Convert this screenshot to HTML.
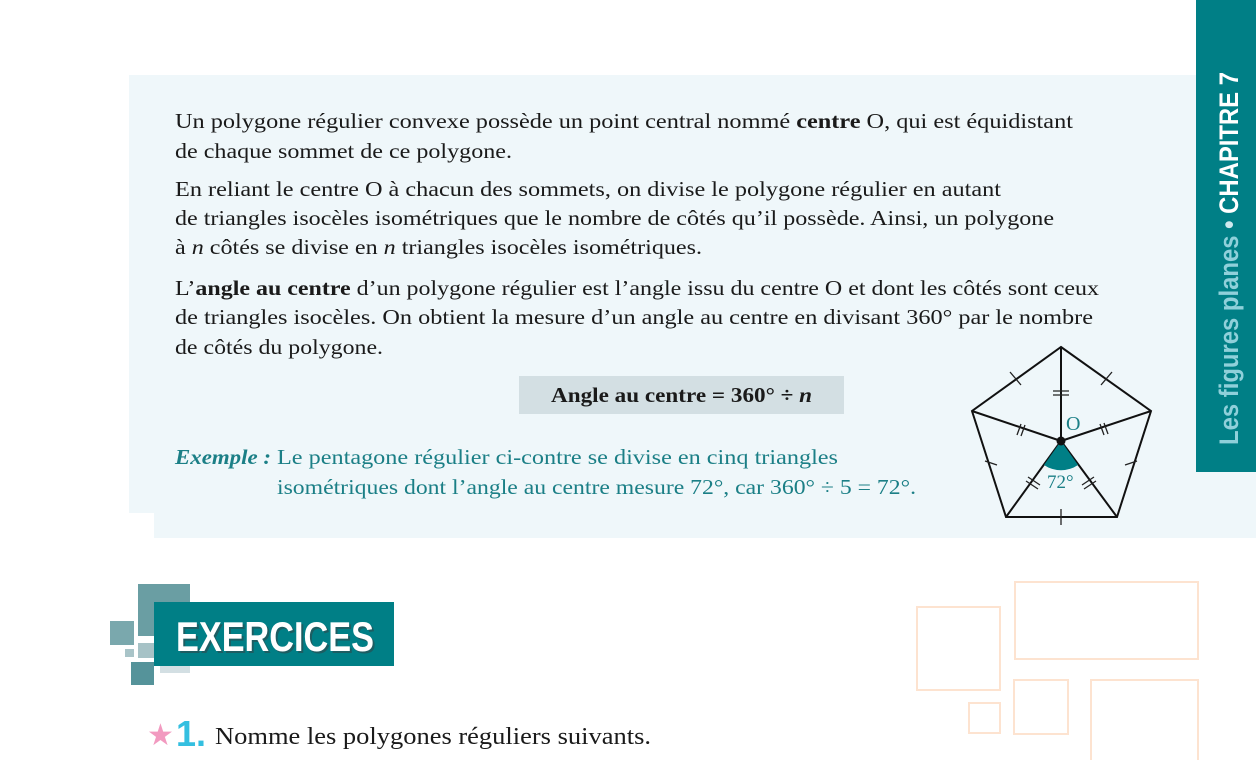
<!DOCTYPE html>
<html><head><meta charset="utf-8"><style>
html,body{margin:0;padding:0;background:#fff;width:1256px;height:760px;overflow:hidden}
svg{display:block}
.t{font-family:"Liberation Serif","DejaVu Serif",serif;font-size:21px;fill:#1a1a1a}
.b{font-weight:bold}
.g{fill:#1b7f86}
</style></head><body>
<svg width="1256" height="760" viewBox="0 0 1256 760" xmlns="http://www.w3.org/2000/svg">
<path d="M129 75H1256V538H154V513H129Z" fill="#eff7fa"/>
<rect x="1196" y="0" width="60" height="472" fill="#007f86"/>
<text transform="translate(1238,445) rotate(-90)" font-family="Liberation Sans Narrow,Liberation Sans,sans-serif" font-weight="bold" font-size="27" textLength="373" lengthAdjust="spacingAndGlyphs"><tspan fill="#8fd0da">Les figures planes  </tspan><tspan fill="#cfe9ee">•  </tspan><tspan fill="#fff">CHAPITRE 7</tspan></text>

<text class="t" x="175" y="128" textLength="898" lengthAdjust="spacingAndGlyphs">Un polygone régulier convexe possède un point central nommé <tspan class="b">centre</tspan> O, qui est équidistant</text>
<text class="t" x="175" y="158" textLength="337" lengthAdjust="spacingAndGlyphs">de chaque sommet de ce polygone.</text>
<text class="t" x="175" y="196" textLength="826" lengthAdjust="spacingAndGlyphs">En reliant le centre O à chacun des sommets, on divise le polygone régulier en autant</text>
<text class="t" x="175" y="225" textLength="879" lengthAdjust="spacingAndGlyphs">de triangles isocèles isométriques que le nombre de côtés qu’il possède. Ainsi, un polygone</text>
<text class="t" x="175" y="254" textLength="527" lengthAdjust="spacingAndGlyphs">à <tspan font-style="italic">n</tspan> côtés se divise en <tspan font-style="italic">n</tspan> triangles isocèles isométriques.</text>
<text class="t" x="175" y="295" textLength="924" lengthAdjust="spacingAndGlyphs">L’<tspan class="b">angle au centre</tspan> d’un polygone régulier est l’angle issu du centre O et dont les côtés sont ceux</text>
<text class="t" x="175" y="324" textLength="918" lengthAdjust="spacingAndGlyphs">de triangles isocèles. On obtient la mesure d’un angle au centre en divisant 360° par le nombre</text>
<text class="t" x="175" y="354" textLength="208" lengthAdjust="spacingAndGlyphs">de côtés du polygone.</text>

<rect x="519" y="376" width="325" height="38" fill="#d3dfe3"/>
<text class="t b" x="551" y="402" textLength="261" lengthAdjust="spacingAndGlyphs">Angle au centre = 360° ÷ <tspan font-style="italic">n</tspan></text>

<text class="t g b" x="175" y="464" font-style="italic" textLength="96" lengthAdjust="spacingAndGlyphs">Exemple :</text>
<text class="t g" x="277" y="464" textLength="561" lengthAdjust="spacingAndGlyphs">Le pentagone régulier ci-contre se divise en cinq triangles</text>
<text class="t g" x="277" y="494" textLength="639" lengthAdjust="spacingAndGlyphs">isométriques dont l’angle au centre mesure 72°, car 360° ÷ 5 = 72°.</text>

<g stroke="#111" stroke-width="2" fill="none">
<path d="M1061 347L1151 411L1117 517L1006 517L972 411Z"/>
<path d="M1061 441L1061 347M1061 441L1151 411M1061 441L1117 517M1061 441L1006 517M1061 441L972 411"/>
</g>
<path d="M1061 441L1044 465A30 30 0 0 0 1078 465Z" fill="#007f86"/>
<circle cx="1061" cy="441" r="4.5" fill="#111"/>
<g stroke="#222" stroke-width="1.3">
<path d="M1010 372L1021 385M1101 385L1112 372M985 461L997 465M1125 465L1137 461M1061 509L1061 525"/>
<path d="M1053 391H1069M1053 395H1069"/>
<path d="M1017 435L1021 424M1021 436L1025 425M1100 424L1104 435M1104 423L1108 434"/>
<path d="M1026 481L1038 489M1028 477L1040 485M1082 485L1094 477M1084 489L1096 481"/>
</g>
<text x="1066" y="430" font-family="Liberation Serif,serif" font-size="20" fill="#1b7f86">O</text>
<text x="1047" y="488" font-family="Liberation Serif,serif" font-size="19" fill="#1b7f86">72°</text>

<g fill="none" stroke="#fde3d0" stroke-width="2">
<rect x="917" y="607" width="83" height="83"/>
<rect x="1015" y="582" width="183" height="77"/>
<rect x="969" y="703" width="31" height="30"/>
<rect x="1014" y="680" width="54" height="54"/>
<rect x="1091" y="680" width="107" height="82"/>
</g>

<rect x="138" y="584" width="52" height="52" fill="#6a9ea3"/>
<rect x="110" y="621" width="24" height="24" fill="#7aa8ad"/>
<rect x="125" y="649" width="9" height="8" fill="#a9c4c8"/>
<rect x="138" y="643" width="17" height="15" fill="#a6c2c6"/>
<rect x="131" y="662" width="23" height="23" fill="#55939a"/>
<rect x="160" y="665" width="30" height="8" fill="#d3dfe3"/>
<rect x="154" y="602" width="240" height="64" fill="#007f86"/>
<text x="176" y="651" font-family="Liberation Sans Narrow,Liberation Sans,sans-serif" font-weight="bold" font-size="42" fill="#1d5d62" textLength="198" lengthAdjust="spacingAndGlyphs" transform="translate(2,2)">EXERCICES</text>
<text x="176" y="651" font-family="Liberation Sans Narrow,Liberation Sans,sans-serif" font-weight="bold" font-size="42" fill="#fff" textLength="198" lengthAdjust="spacingAndGlyphs">EXERCICES</text>

<text x="147" y="745" font-family="DejaVu Sans,sans-serif" font-size="30" fill="#f29ac0">★</text>
<text x="176" y="746" font-family="Liberation Sans,sans-serif" font-weight="bold" font-size="36" fill="#34bfe0">1.</text>
<text class="t" x="215" y="744" textLength="436" lengthAdjust="spacingAndGlyphs" style="font-size:24px">Nomme les polygones réguliers suivants.</text>
</svg>
</body></html>
